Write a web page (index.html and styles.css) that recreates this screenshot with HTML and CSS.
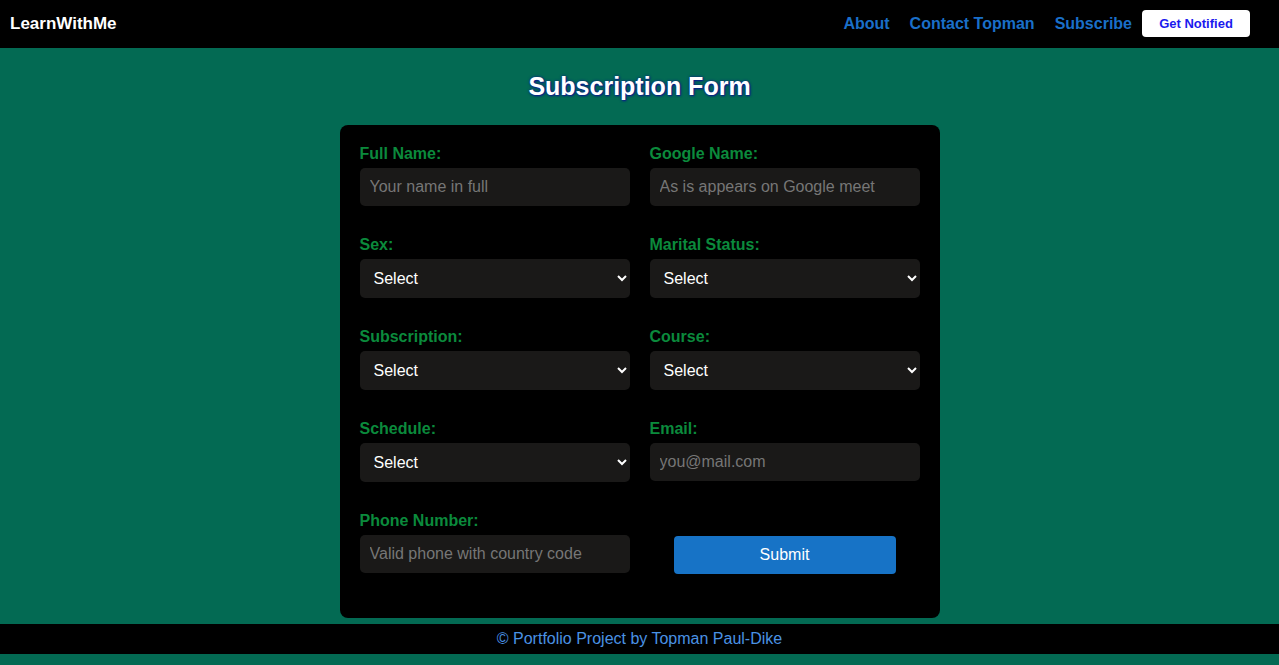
FILE: index.html
```html
<!DOCTYPE html>
<html lang="en">
<head>
<meta charset="utf-8">
<title>LearnWithMe - Subscription Form</title>
<link rel="stylesheet" href="styles.css">
</head>
<body>
<header class="topbar">
  <a class="logo" href="#">LearnWithMe</a>
  <nav class="nav">
    <a class="nav-link" href="#">About</a>
    <a class="nav-link" href="#">Contact Topman</a>
    <a class="nav-link" href="#">Subscribe</a>
    <button class="notify-btn" type="button">Get Notified</button>
  </nav>
</header>
<main class="main">
  <h2 class="page-title">Subscription Form</h2>
  <form class="card">
    <div class="field">
      <label class="label" for="fullname">Full Name:</label>
      <input class="control" id="fullname" type="text" placeholder="Your name in full">
    </div>
    <div class="field">
      <label class="label" for="gname">Google Name:</label>
      <input class="control" id="gname" type="text" placeholder="As is appears on Google meet">
    </div>
    <div class="field">
      <label class="label" for="sex">Sex:</label>
      <select class="control select" id="sex"><option>Select</option></select>
    </div>
    <div class="field">
      <label class="label" for="marital">Marital Status:</label>
      <select class="control select" id="marital"><option>Select</option></select>
    </div>
    <div class="field">
      <label class="label" for="sub">Subscription:</label>
      <select class="control select" id="sub"><option>Select</option></select>
    </div>
    <div class="field">
      <label class="label" for="course">Course:</label>
      <select class="control select" id="course"><option>Select</option></select>
    </div>
    <div class="field">
      <label class="label" for="schedule">Schedule:</label>
      <select class="control select" id="schedule"><option>Select</option></select>
    </div>
    <div class="field">
      <label class="label" for="email">Email:</label>
      <input class="control" id="email" type="email" placeholder="you@mail.com">
    </div>
    <div class="field">
      <label class="label" for="phone">Phone Number:</label>
      <input class="control" id="phone" type="tel" placeholder="Valid phone with country code">
    </div>
    <div class="field submit-cell">
      <button class="submit-btn" type="button">Submit</button>
    </div>
  </form>
</main>
<footer class="footer">© Portfolio Project by Topman Paul-Dike</footer>
</body>
</html>
```
FILE: styles.css
```css
* { box-sizing: border-box; }
html, body {
  margin: 0;
  padding: 0;
}
body {
  background: #036a53;
  font-family: "Liberation Sans", Arial, sans-serif;
  min-height: 665px;
}
.topbar {
  height: 48px;
  background: #000;
  display: flex;
  align-items: center;
  justify-content: space-between;
  padding: 0 29px 0 10px;
}
.logo {
  color: #fff;
  font-weight: bold;
  font-size: 17px;
  text-decoration: none;
}
.nav {
  display: flex;
  align-items: center;
  gap: 21px;
}
.nav-link {
  color: #1a6fc9;
  font-weight: bold;
  font-size: 16px;
  text-decoration: none;
}
.nav-link:nth-child(2) {
  margin-right: -1px;
}
.nav-link:first-child {
  margin-right: -1px;
}
.notify-btn {
  margin-left: -11px;
  margin-top: -1px;
  height: 27px;
  width: 108px;
  border: none;
  border-radius: 4px;
  background: #fff;
  color: #1a1aee;
  font-family: "Liberation Sans", Arial, sans-serif;
  font-weight: bold;
  font-size: 13px;
  padding: 0;
}
.main {
  display: flex;
  flex-direction: column;
  align-items: center;
}
.page-title {
  margin: 24px 0 25px;
  height: 28px;
  line-height: 28px;
  font-size: 25px;
  font-weight: bold;
  color: #fff;
  text-shadow: 0 0 3px #0b1a8c, 1px 1px 2px #0b1a8c;
}
.card {
  width: 600px;
  background: #000;
  border-radius: 8px;
  padding: 20px 20px 45px;
  display: grid;
  grid-template-columns: 270px 270px;
  column-gap: 20px;
  row-gap: 30px;
}
.field {
  display: flex;
  flex-direction: column;
}
.label {
  color: #0b8a3c;
  font-weight: bold;
  font-size: 16px;
  line-height: 18px;
  margin-bottom: 5px;
}
.control {
  height: 38px;
  border: none;
  border-radius: 5px;
  background: #1a1918;
  color: #fff;
  font-family: "Liberation Sans", Arial, sans-serif;
  font-size: 16px;
  padding: 0 10px;
  outline: none;
}
.control::placeholder {
  color: #767676;
}
.select {
  height: 39px;
  color-scheme: dark;
}
.submit-cell {
  justify-content: flex-end;
}
.submit-btn {
  margin-left: 24px;
  width: 222px;
  height: 38px;
  border: none;
  border-radius: 4px;
  background: #1773c6;
  color: #fff;
  font-family: "Liberation Sans", Arial, sans-serif;
  font-size: 16px;
  margin-bottom: -1px;
}
.footer {
  margin-top: 6px;
  height: 30px;
  background: #000;
  color: #4a92e4;
  font-size: 16px;
  display: flex;
  align-items: center;
  justify-content: center;
}
```
